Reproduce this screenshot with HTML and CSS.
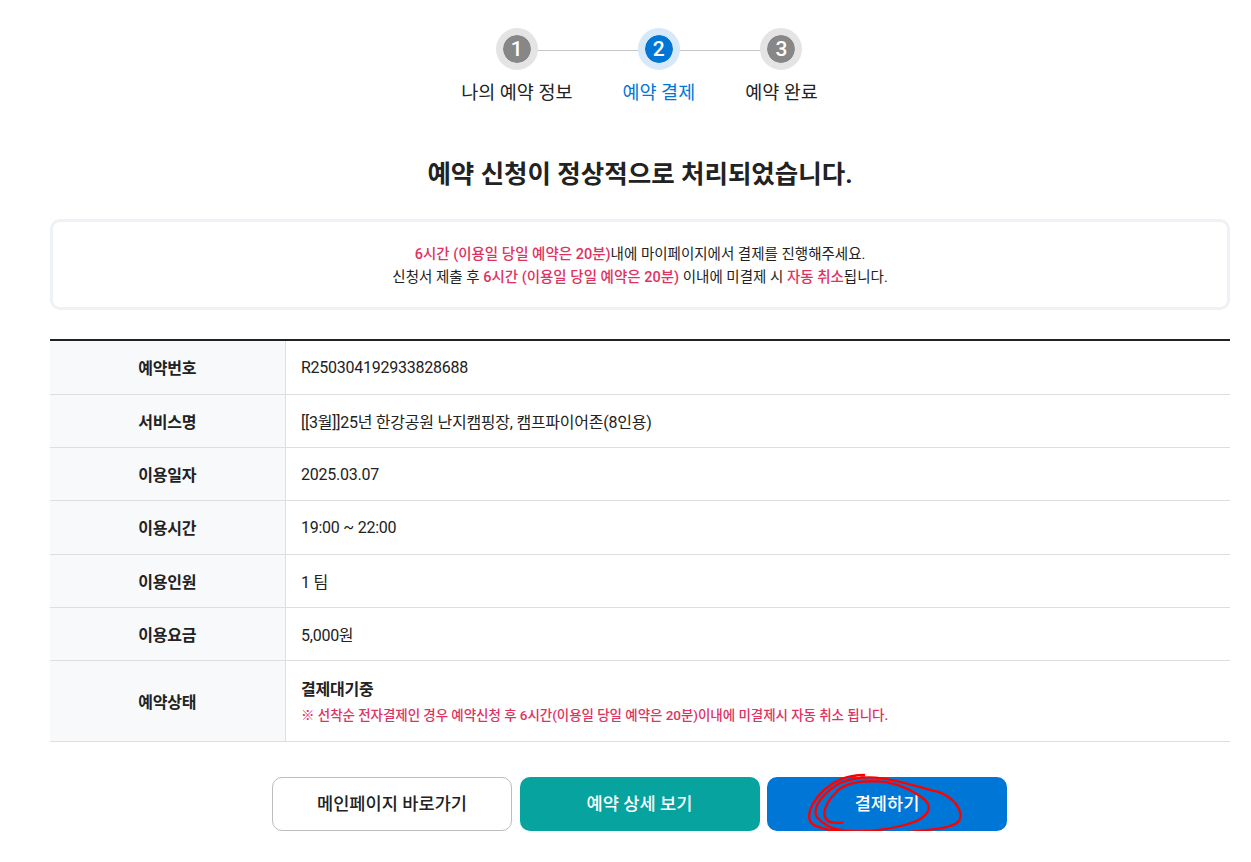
FILE: index.html
```html
<!DOCTYPE html>
<html lang="ko">
<head>
  <meta charset="UTF-8">
  <title>예약 결제</title>
  <link rel="stylesheet" href="styles.css">
</head>
<body>
  <div class="container">
    <ol class="steps">
      <li class="step"><span class="step-num">1</span><span class="step-label">나의 예약 정보</span></li>
      <li class="step active"><span class="step-num">2</span><span class="step-label">예약 결제</span></li>
      <li class="step"><span class="step-num">3</span><span class="step-label">예약 완료</span></li>
    </ol>

    <h2 class="title">예약 신청이 정상적으로 처리되었습니다.</h2>

    <div class="notice">
      <p><em>6시간 (이용일 당일 예약은 20분)</em>내에 마이페이지에서 결제를 진행해주세요.</p>
      <p>신청서 제출 후 <em>6시간 (이용일 당일 예약은 20분)</em> 이내에 미결제 시 <em>자동 취소</em>됩니다.</p>
    </div>

    <table class="info">
      <tr class="first"><th>예약번호</th><td>R250304192933828688</td></tr>
      <tr><th>서비스명</th><td>[[3월]]25년 한강공원 난지캠핑장, 캠프파이어존(8인용)</td></tr>
      <tr><th>이용일자</th><td>2025.03.07</td></tr>
      <tr><th>이용시간</th><td>19:00 ~ 22:00</td></tr>
      <tr><th>이용인원</th><td>1 팀</td></tr>
      <tr><th>이용요금</th><td>5,000원</td></tr>
      <tr class="last">
        <th>예약상태</th>
        <td>
          <strong>결제대기중</strong>
          <p class="warn">※ 선착순 전자결제인 경우 예약신청 후 6시간(이용일 당일 예약은 20분)이내에 미결제시 자동 취소 됩니다.</p>
        </td>
      </tr>
    </table>

    <div class="buttons">
      <a class="btn btn-line" href="#">메인페이지 바로가기</a>
      <a class="btn btn-teal" href="#">예약 상세 보기</a>
      <a class="btn btn-blue" href="#">결제하기
        <svg class="scribble" viewBox="0 0 510 225" aria-hidden="true">
          <path d="M130 173 C105 174 85 176 76 158 C66 135 85 105 112 78 C140 52 190 46 245 50 C300 56 350 82 378 108 C396 128 385 150 350 168 C300 188 215 203 140 198 C95 194 68 178 50 155 C38 132 58 100 95 70 C130 42 190 32 245 40 C300 46 350 66 420 82 C455 98 478 122 482 150 C482 172 465 182 420 190 C350 200 270 210 190 206 C130 204 80 197 45 182 C25 172 22 150 38 118 C55 88 85 60 120 44 C145 33 170 30 195 30" />
        </svg>
      </a>
    </div>
  </div>
</body>
</html>
```

FILE: styles.css
```css
* {
  box-sizing: border-box;
}
body {
  margin: 0;
  background: #fff;
  color: #222;
  font-family: Roboto, "Noto Sans CJK KR", sans-serif;
}
p {
  margin: 0;
}
.container {
  width: 1180px;
  margin-left: 50px;
  padding-top: 28px;
}

/* steps */
.steps {
  display: flex;
  justify-content: center;
  gap: 50px;
  list-style: none;
  margin: 0;
  padding: 0 1px 0 0;
}
.step {
  position: relative;
  display: flex;
  flex-direction: column;
  align-items: center;
}
.step + .step::before {
  content: "";
  position: absolute;
  top: 22px;
  right: 50%;
  width: 142px;
  height: 1px;
  background: #c8c8c8;
}
.step:last-child::before {
  width: 122px;
}
.step-num {
  position: relative;
  z-index: 1;
  width: 42px;
  height: 42px;
  border: 7px solid #e4e4e4;
  border-radius: 50%;
  background: #878787;
  background-clip: padding-box;
  color: #fff;
  font-size: 21px;
  font-weight: 500;
  line-height: 28px;
  text-align: center;
}
.step-label {
  margin-top: 9px;
  font-size: 18.5px;
  line-height: 28px;
  white-space: nowrap;
}
.step.active .step-num {
  border-color: #d7e8f8;
  background-color: #0077d6;
}
.step.active .step-label {
  color: #0077d6;
}

.title {
  margin: 49px 0 27px;
  font-size: 25.5px;
  font-weight: 700;
  line-height: 36px;
  text-align: center;
}

/* notice box */
.notice {
  height: 91px;
  padding-top: 21px;
  border: 3px solid #eef1f5;
  border-radius: 10px;
  font-size: 14.5px;
  line-height: 23px;
  text-align: center;
}
.notice em {
  color: #e0325f;
  font-style: normal;
  font-weight: 500;
}

/* info table */
.info {
  width: 100%;
  margin-top: 29px;
  border-collapse: collapse;
  border-top: 2px solid #222;
  font-size: 16px;
  letter-spacing: -0.25px;
}
.info th,
.info td {
  height: 53.4px;
  border-bottom: 1px solid #dcdee2;
}
.info .first th,
.info .first td {
  height: 54px;
}
.info th {
  width: 235px;
  border-right: 1px solid #dcdee2;
  background: #f8f9fb;
  font-weight: 700;
}
.info td {
  padding-left: 15.5px;
}
.info .last th,
.info .last td {
  height: 81px;
}
.info .last td {
  padding-bottom: 3px;
}
.info strong {
  font-weight: 700;
}
.warn {
  margin-top: 4px;
  color: #e0325f;
  font-size: 13.5px;
  font-weight: 500;
  letter-spacing: -0.05px;
}

/* buttons */
.buttons {
  display: flex;
  justify-content: center;
  gap: 7.5px;
  margin-top: 35px;
  padding-right: 1px;
}
.btn {
  position: relative;
  width: 240px;
  height: 54px;
  border-radius: 10px;
  font-size: 17.6px;
  font-weight: 500;
  line-height: 54px;
  text-align: center;
  text-decoration: none;
}
.btn-line {
  border: 1px solid #bdbdbd;
  color: #222;
  line-height: 52px;
}
.btn-teal {
  background: #07a39f;
  color: #fff;
}
.btn-blue {
  background: #0077d6;
  color: #fff;
}
.scribble {
  position: absolute;
  left: 33px;
  top: -12px;
  width: 170px;
  height: 75px;
  fill: none;
  stroke: #f00;
  stroke-width: 7;
}
```
